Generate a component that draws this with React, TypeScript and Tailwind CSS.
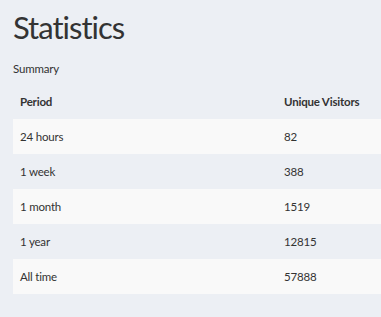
import React from 'react';

const rows = [
  { period: '24 hours', visitors: '82' },
  { period: '1 week', visitors: '388' },
  { period: '1 month', visitors: '1519' },
  { period: '1 year', visitors: '12815' },
  { period: 'All time', visitors: '57888' },
];

export default function App() {
  return (
    <div className="min-h-[317px] w-full bg-[#eceff4] pl-[13px] pt-[7px] text-[#333] font-['Lato',sans-serif]">
      <h1 className="text-[31px] leading-[40px] tracking-[-1px] font-normal text-[#333]">Statistics</h1>
      <p className="mt-[15px] text-[11.5px] leading-[14px] tracking-[-0.2px]">Summary</p>
      <table className="mt-[8px] w-full border-collapse text-[11.5px] tracking-[-0.2px]">
        <thead>
          <tr className="h-[35px]">
            <th className="w-[271px] pl-[7px] text-left font-bold">Period</th>
            <th className="text-left font-bold">Unique Visitors</th>
          </tr>
        </thead>
        <tbody>
          {rows.map((r, i) => (
            <tr key={r.period} className={i % 2 === 0 ? 'h-[35px] bg-[#f9f9f9]' : 'h-[35px]'}>
              <td className="pl-[7px]">{r.period}</td>
              <td>{r.visitors}</td>
            </tr>
          ))}
        </tbody>
      </table>
    </div>
  );
}
